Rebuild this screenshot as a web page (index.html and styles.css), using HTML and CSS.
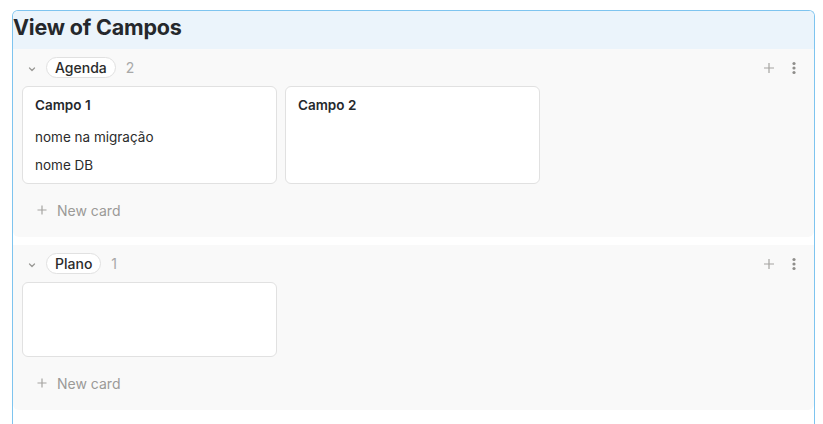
FILE: index.html
```html
<!DOCTYPE html>
<html>
<head>
<meta charset="utf-8">
<link rel="stylesheet" href="styles.css">
</head>
<body>
<div class="board">
  <div class="board-header"><h1 class="title">View of Campos</h1></div>

  <section class="group">
    <div class="group-head">
      <svg class="chev" width="10" height="10" viewBox="0 0 10 10"><path d="M2.5 4 L5 6.5 L7.5 4" fill="none" stroke="#9b9a97" stroke-width="1.3" stroke-linecap="round" stroke-linejoin="round"/></svg>
      <span class="pill">Agenda</span>
      <span class="count">2</span>
      <span class="spacer"></span>
      <svg class="act-plus" width="12" height="12" viewBox="0 0 12 12"><path d="M6 1 V11 M1 6 H11" stroke="#a5a4a1" stroke-width="1.2"/></svg>
      <svg class="act-dots" width="6" height="14" viewBox="0 0 6 14"><circle cx="3" cy="2.5" r="1.6" fill="#8f8e8b"/><circle cx="3" cy="7" r="1.6" fill="#8f8e8b"/><circle cx="3" cy="11.5" r="1.6" fill="#8f8e8b"/></svg>
    </div>
    <div class="cards">
      <div class="card tall">
        <div class="card-title">Campo 1</div>
        <div class="prop">nome na migração</div>
        <div class="prop">nome DB</div>
      </div>
      <div class="card tall">
        <div class="card-title">Campo 2</div>
      </div>
    </div>
    <div class="new-card">
      <svg width="10" height="10" viewBox="0 0 10 10"><path d="M5 0.5 V9.5 M0.5 5 H9.5" stroke="#a5a4a1" stroke-width="1.2"/></svg>
      <span>New card</span>
    </div>
  </section>

  <section class="group">
    <div class="group-head">
      <svg class="chev" width="10" height="10" viewBox="0 0 10 10"><path d="M2.5 4 L5 6.5 L7.5 4" fill="none" stroke="#9b9a97" stroke-width="1.3" stroke-linecap="round" stroke-linejoin="round"/></svg>
      <span class="pill">Plano</span>
      <span class="count">1</span>
      <span class="spacer"></span>
      <svg class="act-plus" width="12" height="12" viewBox="0 0 12 12"><path d="M6 1 V11 M1 6 H11" stroke="#a5a4a1" stroke-width="1.2"/></svg>
      <svg class="act-dots" width="6" height="14" viewBox="0 0 6 14"><circle cx="3" cy="2.5" r="1.6" fill="#8f8e8b"/><circle cx="3" cy="7" r="1.6" fill="#8f8e8b"/><circle cx="3" cy="11.5" r="1.6" fill="#8f8e8b"/></svg>
    </div>
    <div class="cards">
      <div class="card short"></div>
    </div>
    <div class="new-card">
      <svg width="10" height="10" viewBox="0 0 10 10"><path d="M5 0.5 V9.5 M0.5 5 H9.5" stroke="#a5a4a1" stroke-width="1.2"/></svg>
      <span>New card</span>
    </div>
  </section>
</div>
</body>
</html>
```

FILE: styles.css
```css
* { box-sizing: border-box; }
html, body { background: #fff; }
body {
  margin: 10px 0 0 12px;
  font-family: Inter, "Noto Sans", sans-serif;
  color: #37352f;
  overflow: hidden;
}
.board {
  width: 803px;
  height: 430px;
  border: 1px solid #7ec4ef;
  border-bottom: none;
  border-radius: 6px 6px 0 0;
}
.board-header {
  height: 38px;
  background: #ebf4fb;
  border-radius: 5px 5px 0 0;
  display: flex;
  align-items: center;
  padding-bottom: 6px;
}
.title {
  margin: 0;
  font-size: 21.5px;
  font-weight: 700;
  color: #25282c;
  letter-spacing: -0.2px;
}
.group {
  background: #f9f9f9;
  border-radius: 0 0 6px 6px;
  margin-bottom: 8px;
  padding: 8px 0 10px 0;
}
.group-head {
  height: 21px;
  display: flex;
  align-items: center;
  padding-left: 14px;
  padding-right: 15px;
}
.chev { margin-right: 9px; margin-top: 2px; }
.pill {
  height: 21px;
  display: inline-flex;
  align-items: center;
  padding: 0 8px;
  border: 1px solid #e1e1e1;
  border-radius: 11px;
  background: #fff;
  font-size: 14px;
  font-weight: 500;
  color: #2b2b2b;
}
.count {
  margin-left: 10px;
  font-size: 14px;
  color: #a8a8a8;
}
.spacer { flex: 1; }
.act-plus { margin-right: 16px; }
.act-dots { margin-right: 2px; }
.cards {
  display: flex;
  gap: 8px;
  padding: 8px 0 0 9px;
}
.card {
  width: 255px;
  background: #fff;
  border: 1px solid #e1e1e1;
  border-radius: 6px;
  padding: 8px 12px;
}
.card.tall { height: 98px; }
.card.short { height: 75px; }
.card-title {
  font-size: 13.5px;
  font-weight: 600;
  color: #25282c;
  line-height: 20px;
}
.prop {
  font-size: 13.5px;
  color: #2b2b2b;
  line-height: 20px;
  margin-top: 8px;
}
.card-title + .prop { margin-top: 12px; }
.new-card {
  height: 34px;
  margin-top: 9px;
  display: flex;
  align-items: center;
  padding-left: 24px;
  font-size: 14px;
  color: #9b9a97;
}
.new-card svg { margin-right: 10px; }
```
